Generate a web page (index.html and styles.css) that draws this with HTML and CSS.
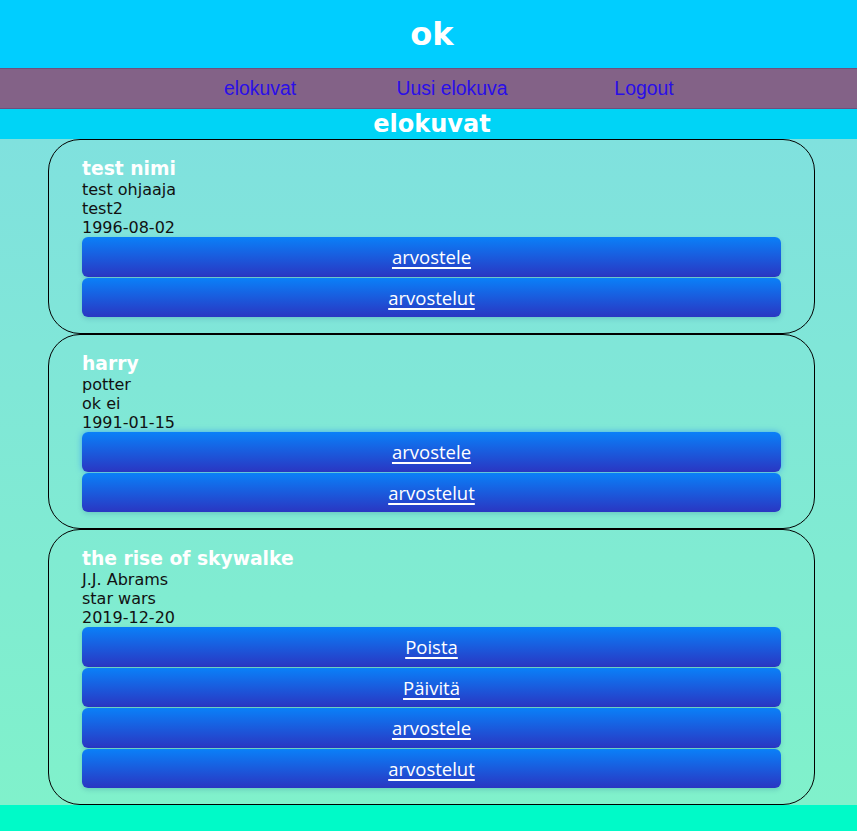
FILE: index.html
```html
<!DOCTYPE html>
<html lang="fi">
<head>
<meta charset="utf-8">
<title>ok</title>
<link rel="stylesheet" href="styles.css">
</head>
<body>
<header class="top">
  <h1 class="brand">ok</h1>
</header>
<nav class="nav">
  <ul class="nav-list">
    <li class="nav-item"><a class="nav-link" href="#">elokuvat</a></li>
    <li class="nav-item"><a class="nav-link" href="#">Uusi elokuva</a></li>
    <li class="nav-item"><a class="nav-link" href="#">Logout</a></li>
  </ul>
</nav>
<div class="section-band"><h2 class="section-title">elokuvat</h2></div>
<main class="main">
  <div class="list">
    <article class="card">
      <h3 class="card-title">test nimi</h3>
      <div class="card-line">test ohjaaja</div>
      <div class="card-line">test2</div>
      <div class="card-line">1996-08-02</div>
      <div class="actions">
        <a class="btn" href="#">arvostele</a>
        <a class="btn" href="#">arvostelut</a>
      </div>
    </article>
    <article class="card">
      <h3 class="card-title">harry</h3>
      <div class="card-line">potter</div>
      <div class="card-line">ok ei</div>
      <div class="card-line">1991-01-15</div>
      <div class="actions">
        <a class="btn btn-focus" href="#">arvostele</a>
        <a class="btn" href="#">arvostelut</a>
      </div>
    </article>
    <article class="card">
      <h3 class="card-title">the rise of skywalke</h3>
      <div class="card-line">J.J. Abrams</div>
      <div class="card-line">star wars</div>
      <div class="card-line">2019-12-20</div>
      <div class="actions">
        <a class="btn" href="#">Poista</a>
        <a class="btn" href="#">Päivitä</a>
        <a class="btn" href="#">arvostele</a>
        <a class="btn" href="#">arvostelut</a>
      </div>
    </article>
  </div>
</main>
<footer class="bottom"></footer>
</body>
</html>
```
FILE: styles.css
```css
* { box-sizing: border-box; }
html, body { margin: 0; padding: 0; }
body {
  font-family: "DejaVu Sans", Verdana, sans-serif;
  background: #00fac8;
  min-height: 831px;
  display: flex;
  flex-direction: column;
}
.top {
  background: #00ceff;
  height: 68px;
  display: flex;
  align-items: center;
  justify-content: center;
  padding-left: 7px;
}
.brand {
  margin: 0;
  color: #fff;
  font-size: 32px;
  font-weight: bold;
  line-height: 1;
}
.nav {
  background: #836287;
  border-top: 1px solid #6e4f7d;
  border-bottom: 1px solid #6e4f7d;
  height: 41px;
}
.nav-list {
  list-style: none;
  margin: 0;
  padding: 0 0 0 47px;
  height: 100%;
  display: flex;
  justify-content: center;
  align-items: center;
}
.nav-item {
  width: 192px;
  text-align: center;
}
.nav-link {
  font-family: "Liberation Sans", Arial, sans-serif;
  font-size: 19.4px;
  color: #2a0ee8;
  text-decoration: none;
}
.section-band {
  background: #00d4f6;
  height: 30px;
  padding-left: 7px;
  display: flex;
  justify-content: center;
  align-items: center;
}
.section-title {
  margin: 0;
  color: #fff;
  font-size: 24px;
  font-weight: bold;
  line-height: 30px;
}
.main {
  background: linear-gradient(to bottom, #80e1de, #80f1cb);
  padding: 0 42px 0 48px;
}
.list {
  display: flex;
  flex-direction: column;
}
.card {
  border: 1px solid #000;
  border-radius: 32px;
  padding: 17px 33px 15px 33px;
}
.card-title {
  margin: 0;
  color: #fff;
  font-size: 18.72px;
  font-weight: bold;
  line-height: 23px;
}
.card-line {
  color: #111;
  font-size: 16px;
  line-height: 19px;
}
.actions {
  display: flex;
  flex-direction: column;
}
.btn {
  display: flex;
  align-items: center;
  justify-content: center;
  height: 39.5px;
  margin-bottom: 1px;
  border-radius: 6px;
  background: linear-gradient(to bottom, #0a80f8, #2a36c2);
  box-shadow: 0 2px 5px rgba(0, 60, 120, 0.18);
  color: #fff;
  font-family: "Open Sans", "Noto Sans", sans-serif;
  font-size: 18.5px;
  text-decoration: underline;
  text-underline-offset: 3px;
  text-decoration-thickness: 2px;
}
.btn-focus {
  box-shadow: 0 0 6px rgba(20, 110, 255, 0.55);
}
.bottom {
  flex: 1;
  min-height: 26px;
  background: #00fac8;
}
```
